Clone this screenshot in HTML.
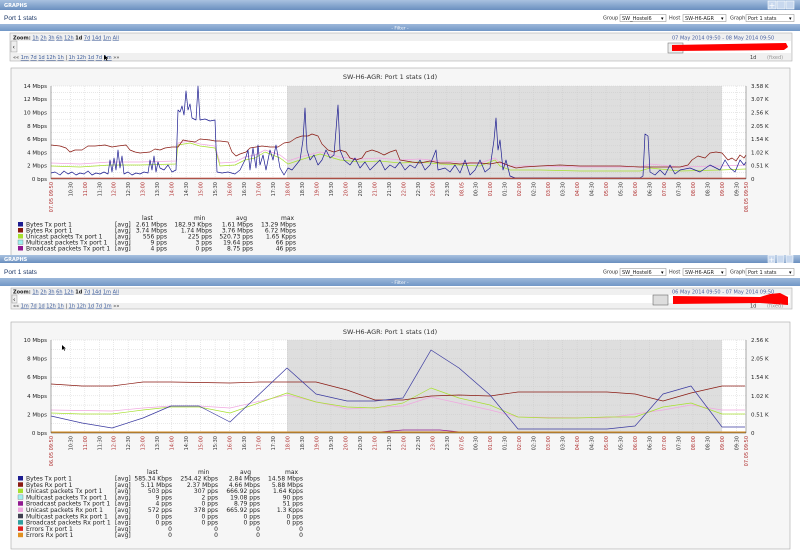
<!DOCTYPE html>
<html><head><meta charset="utf-8"><style>
html,body{margin:0;padding:0;background:#fff;width:800px;height:555px;overflow:hidden}
svg{display:block;font-family:"DejaVu Sans","Liberation Sans",sans-serif}
.u{fill:#3a5a9a;text-decoration:underline}
.t{font-size:5px;fill:#333}
.tr{font-size:5px;fill:#b03030}
.ax{font-size:5.5px;fill:#222}
.lg{font-size:6px;fill:#222}
</style></head><body>
<svg width="800" height="555" viewBox="0 0 800 555" xmlns="http://www.w3.org/2000/svg">
<defs>
<linearGradient id="hb" x1="0" y1="0" x2="0" y2="1"><stop offset="0" stop-color="#a9c2e0"/><stop offset="1" stop-color="#6a8fbf"/></linearGradient>
<linearGradient id="fb" x1="0" y1="0" x2="0" y2="1"><stop offset="0" stop-color="#9db8da"/><stop offset="1" stop-color="#7197c6"/></linearGradient>
<pattern id="hg" width="800" height="1" patternUnits="userSpaceOnUse"></pattern>
</defs>

<!-- ===== PANEL 1 ===== -->
<rect x="0" y="0" width="800" height="10" fill="url(#hb)"/>
<text x="4" y="7" font-size="5" font-weight="bold" fill="#fff">GRAPHS</text>
<rect x="768" y="1" width="8" height="8" fill="#c8d8ee" stroke="#fff" stroke-width=".6"/><text x="772" y="8" font-size="8" fill="#fff" text-anchor="middle">+</text>
<rect x="777" y="1" width="8" height="8" fill="#c8d8ee" stroke="#fff" stroke-width=".6"/>
<rect x="786" y="1" width="8" height="8" fill="#c8d8ee" stroke="#fff" stroke-width=".6"/>
<text x="4" y="20" font-size="6.5" fill="#1c3766" font-family="Liberation Sans,sans-serif">Port 1 stats</text>
<text x="603" y="19.5" font-size="5" fill="#333">Group</text>
<rect x="620" y="14.5" width="46" height="7" fill="#fff" stroke="#888" stroke-width=".5"/><text x="622" y="20" font-size="5" fill="#222">SW_Hostel6</text><text x="661" y="20" font-size="5">▾</text>
<text x="669" y="19.5" font-size="5" fill="#333">Host</text>
<rect x="683" y="14.5" width="43" height="7" fill="#fff" stroke="#888" stroke-width=".5"/><text x="685" y="20" font-size="5" fill="#222">SW-H6-AGR</text><text x="721" y="20" font-size="5">▾</text>
<text x="730" y="19.5" font-size="5" fill="#333">Graph</text>
<rect x="746" y="14.5" width="48" height="7" fill="#fff" stroke="#888" stroke-width=".5"/><text x="748" y="20" font-size="5" fill="#222">Port 1 stats</text><text x="789" y="20" font-size="5">▾</text>
<rect x="0" y="24" width="800" height="7" fill="url(#fb)"/>
<text x="400" y="29.5" font-size="4.5" fill="#fff" text-anchor="middle">- Filter -</text>
<rect x="10" y="33" width="782" height="28" fill="#f0f0f0" stroke="#b0b0b0" stroke-width=".6"/>
<text x="13" y="39.5" font-size="5" fill="#222"><tspan font-weight="bold">Zoom:</tspan> <tspan class="u">1h</tspan> <tspan class="u">2h</tspan> <tspan class="u">3h</tspan> <tspan class="u">6h</tspan> <tspan class="u">12h</tspan> <tspan font-weight="bold">1d</tspan> <tspan class="u">7d</tspan> <tspan class="u">14d</tspan> <tspan class="u">1m</tspan> <tspan class="u">All</tspan></text>
<text x="672" y="39.5" font-size="5" fill="#4a62a0">07 May 2014 09:50  -  08 May 2014 09:50</text>
<rect x="11" y="41" width="780" height="12" fill="#fff"/>
<rect x="11" y="41" width="6" height="11" fill="#eee" stroke="#999" stroke-width=".5"/><text x="12.5" y="49" font-size="6">‹</text>
<rect x="668" y="43" width="15" height="10" fill="#eee" stroke="#666" stroke-width=".5"/>
<path d="M672 45 L786 43 L788 47 L784 50 L672 51 Z" fill="#f00"/>
<text x="13" y="59" font-size="5" fill="#333">«« <tspan class="u">1m</tspan> <tspan class="u">7d</tspan> <tspan class="u">1d</tspan> <tspan class="u">12h</tspan> <tspan class="u">1h</tspan> | <tspan class="u">1h</tspan> <tspan class="u">12h</tspan> <tspan class="u">1d</tspan> <tspan class="u">7d</tspan> <tspan class="u">1m</tspan> »»</text>
<path d="M104 55 l0 5 l1.5 -1.3 l1.2 2.2 l.8 -.4 l-1.1 -2.1 l2 0 z" fill="#000"/>
<text x="750" y="59" font-size="5" fill="#333">1d</text><text x="767" y="59" font-size="5" fill="#999">(fixed)</text>

<rect x="11" y="68" width="779" height="190" fill="#f6f6f6" stroke="#a8a8a8" stroke-width=".6"/>
<text x="390" y="79" font-size="6.5" fill="#333" text-anchor="middle">SW-H6-AGR: Port 1 stats (1d)</text>
<rect x="51" y="86" width="695" height="93" fill="#fff"/>
<rect x="287" y="86" width="435" height="93" fill="#dedede"/>
<g stroke="#c8c8c8" stroke-width=".4" stroke-dasharray="1,1">
<path d="M51 92.6H746M51 99.3H746M51 105.9H746M51 112.6H746M51 119.2H746M51 125.9H746M51 132.5H746M51 139.2H746M51 145.8H746M51 152.4H746M51 159.1H746M51 165.7H746M51 172.4H746M51 86H746"/>
<path d="M70.3 86V179M84.8 86V179M99.3 86V179M113.7 86V179M128.2 86V179M142.7 86V179M157.2 86V179M171.7 86V179M186.1 86V179M200.6 86V179M215.1 86V179M229.6 86V179M244.1 86V179M258.5 86V179M273 86V179M287.5 86V179M302 86V179M316.5 86V179M330.9 86V179M345.4 86V179M359.9 86V179M374.4 86V179M388.9 86V179M403.3 86V179M417.8 86V179M432.3 86V179M446.8 86V179M461.3 86V179M475.7 86V179M490.2 86V179M504.7 86V179M519.2 86V179M533.7 86V179M548.1 86V179M562.6 86V179M577.1 86V179M591.6 86V179M606.1 86V179M620.5 86V179M635 86V179M649.5 86V179M664 86V179M678.5 86V179M692.9 86V179M707.4 86V179M721.9 86V179M736.4 86V179"/>
</g>
<g fill="none" stroke-width=".7" stroke-linejoin="round">
<polyline stroke="#f0a8e0" transform="translate(0,-3)" points="51,166 80,167 110,165 140,165 176,164 178,146 190,144 200,147 215,149 220,166 235,165 245,160 255,158 265,153 280,158 288,164 300,160 320,155 340,160 360,162 380,161 400,163 420,162 440,164 460,165 480,166 495,161 500,166 510,169 540,169 580,170 640,170 650,167 680,170 720,169 746,168"/>
<polyline stroke="#a8e030" points="51,166 80,167 110,165 140,165 176,164 178,145 190,143 200,146 215,148 220,166 235,165 245,160 255,158 265,152 280,158 288,164 300,160 320,154 340,160 360,162 380,161 400,163 420,162 440,164 460,165 480,166 495,160 500,166 510,170 540,170 580,171 640,171 650,168 680,171 720,170 746,169"/>
<polyline stroke="#8a1a12" points="51,145 60,146 66,148 70,152 75,150 82,150 88,146 95,146 105,145 112,147 118,146 126,145 130,150 135,152 140,153 150,152 155,149 160,150 165,148 172,147 178,147 183,140 188,141 195,142 200,139 210,140 215,141 220,141 228,142 232,152 236,156 240,154 246,152 250,148 256,147 262,146 270,147 278,147 284,143 290,142 296,138 302,136 308,136 312,134 318,136 322,144 328,150 334,152 340,150 346,152 350,158 356,160 362,158 366,152 372,150 378,152 384,155 390,152 396,150 400,160 406,161 412,162 420,163 430,161 440,163 450,163 460,164 470,163 480,163 490,164 500,162 510,166 516,168 524,167 540,166 560,165 580,166 600,166 620,166 640,167 660,167 680,167 688,165 692,160 698,156 705,158 710,153 716,152 722,153 728,160 732,158 736,161 740,155 744,158 746,155"/>
<polyline stroke="#1c1c90" points="51,173 55,172 60,175 64,171 68,174 72,172 76,175 80,173 84,174 88,171 92,175 96,173 100,174 104,172 108,174 110,160 112,172 114,158 116,170 118,150 120,168 122,156 124,174 128,172 132,175 136,173 140,174 144,172 148,173 150,160 152,170 154,156 156,172 158,162 160,168 164,170 168,165 172,172 176,170 178,110 180,112 182,106 184,115 186,91 188,110 190,104 192,118 196,120 198,86 200,120 205,119 210,121 215,120 217,172 222,173 228,172 235,174 240,170 245,160 248,150 250,170 253,148 256,168 258,145 260,165 263,155 266,170 270,150 273,160 276,145 280,168 284,175 288,168 292,170 296,165 300,160 303,140 305,108 307,150 310,160 314,155 318,165 322,160 326,150 330,158 334,155 338,105 340,150 344,160 350,165 355,158 360,168 365,162 370,170 375,165 380,160 385,170 390,165 395,168 400,162 405,170 410,165 415,168 420,160 425,170 430,165 436,150 438,170 445,168 450,172 455,165 460,173 465,160 470,175 475,170 480,160 485,172 490,168 494,140 496,118 498,150 500,140 503,170 506,160 510,176 515,178 640,178 643,176 645,134 648,136 650,172 655,175 660,170 665,175 670,165 675,174 680,170 690,168 700,172 710,165 720,170 725,160 730,168 735,172 740,160 744,165 746,162"/>
<path d="M51 178.3H746" stroke="#c03020" stroke-width="1"/>
</g>
<path d="M51 86V179H746V86" fill="none" stroke="#555" stroke-width=".5"/>
<g class="ax" text-anchor="end">
<text x="47" y="88">14 Mbps</text><text x="47" y="101">12 Mbps</text><text x="47" y="114.5">10 Mbps</text><text x="47" y="128">8 Mbps</text><text x="47" y="141">6 Mbps</text><text x="47" y="154.5">4 Mbps</text><text x="47" y="167.5">2 Mbps</text><text x="47" y="181">0 bps</text>
</g>
<g class="ax">
<text x="751" y="88">3.58 K</text><text x="751" y="101">3.07 K</text><text x="751" y="114.5">2.56 K</text><text x="751" y="128">2.05 K</text><text x="751" y="141">1.54 K</text><text x="751" y="154.5">1.02 K</text><text x="751" y="167.5">0.51 K</text><text x="751" y="181">0</text>
</g>
<g transform="translate(0,182) rotate(-90)" text-anchor="end" font-size="5">
<text class="tr" x="0" y="53">07.05 09:50</text>
<text class="t" x="0" y="72.3">10:30</text><text class="tr" x="0" y="86.8">11:00</text><text class="t" x="0" y="101.3">11:30</text><text class="tr" x="0" y="115.7">12:00</text><text class="t" x="0" y="130.2">12:30</text><text class="tr" x="0" y="144.7">13:00</text><text class="t" x="0" y="159.2">13:30</text><text class="tr" x="0" y="173.7">14:00</text><text class="t" x="0" y="188.1">14:30</text><text class="tr" x="0" y="202.6">15:00</text><text class="t" x="0" y="217.1">15:30</text><text class="tr" x="0" y="231.6">16:00</text><text class="t" x="0" y="246.1">16:30</text><text class="tr" x="0" y="260.5">17:00</text><text class="t" x="0" y="275">17:30</text><text class="tr" x="0" y="289.5">18:00</text><text class="t" x="0" y="304">18:30</text><text class="tr" x="0" y="318.5">19:00</text><text class="t" x="0" y="332.9">19:30</text><text class="tr" x="0" y="347.4">20:00</text><text class="t" x="0" y="361.9">20:30</text><text class="tr" x="0" y="376.4">21:00</text><text class="t" x="0" y="390.9">21:30</text><text class="tr" x="0" y="405.3">22:00</text><text class="t" x="0" y="419.8">22:30</text><text class="tr" x="0" y="434.3">23:00</text><text class="t" x="0" y="448.8">23:30</text><text class="tr" x="0" y="463.3">08.05</text><text class="t" x="0" y="477.7">00:30</text><text class="tr" x="0" y="492.2">01:00</text><text class="t" x="0" y="506.7">01:30</text><text class="tr" x="0" y="521.2">02:00</text><text class="t" x="0" y="535.7">02:30</text><text class="tr" x="0" y="550.1">03:00</text><text class="t" x="0" y="564.6">03:30</text><text class="tr" x="0" y="579.1">04:00</text><text class="t" x="0" y="593.6">04:30</text><text class="tr" x="0" y="608.1">05:00</text><text class="t" x="0" y="622.5">05:30</text><text class="tr" x="0" y="637">06:00</text><text class="t" x="0" y="651.5">06:30</text><text class="tr" x="0" y="666">07:00</text><text class="t" x="0" y="680.5">07:30</text><text class="tr" x="0" y="694.9">08:00</text><text class="t" x="0" y="709.4">08:30</text><text class="tr" x="0" y="723.9">09:00</text><text class="t" x="0" y="738.4">09:30</text>
<text class="tr" x="0" y="748">08.05 09:50</text>
</g>
<g class="lg">
<text x="142" y="220">last</text><text x="194" y="220">min</text><text x="236" y="220">avg</text><text x="281" y="220">max</text>
<rect x="18" y="222" width="5" height="4.5" fill="#1c1c90"/><text x="26" y="226.5">Bytes Tx port 1</text><text x="115" y="226.5">[avg]</text><text x="167" y="226.5" text-anchor="end">2.61 Mbps</text><text x="212" y="226.5" text-anchor="end">182.93 Kbps</text><text x="253" y="226.5" text-anchor="end">1.61 Mbps</text><text x="296" y="226.5" text-anchor="end">13.29 Mbps</text>
<rect x="18" y="228" width="5" height="4.5" fill="#8a1a12"/><text x="26" y="232.5">Bytes Rx port 1</text><text x="115" y="232.5">[avg]</text><text x="167" y="232.5" text-anchor="end">3.74 Mbps</text><text x="212" y="232.5" text-anchor="end">1.74 Mbps</text><text x="253" y="232.5" text-anchor="end">3.76 Mbps</text><text x="296" y="232.5" text-anchor="end">6.72 Mbps</text>
<rect x="18" y="234" width="5" height="4.5" fill="#a8e030"/><text x="26" y="238.5">Unicast packets Tx port 1</text><text x="115" y="238.5">[avg]</text><text x="167" y="238.5" text-anchor="end">556 pps</text><text x="212" y="238.5" text-anchor="end">225 pps</text><text x="253" y="238.5" text-anchor="end">520.73 pps</text><text x="296" y="238.5" text-anchor="end">1.65 Kpps</text>
<rect x="18" y="240" width="5" height="4.5" fill="#a0f0f0" stroke="#555" stroke-width=".3"/><text x="26" y="244.5">Multicast packets Tx port 1</text><text x="115" y="244.5">[avg]</text><text x="167" y="244.5" text-anchor="end">9 pps</text><text x="212" y="244.5" text-anchor="end">3 pps</text><text x="253" y="244.5" text-anchor="end">19.64 pps</text><text x="296" y="244.5" text-anchor="end">66 pps</text>
<rect x="18" y="246" width="5" height="4.5" fill="#901890"/><text x="26" y="250.5">Broadcast packets Tx port 1</text><text x="115" y="250.5">[avg]</text><text x="167" y="250.5" text-anchor="end">4 pps</text><text x="212" y="250.5" text-anchor="end">0 pps</text><text x="253" y="250.5" text-anchor="end">8.75 pps</text><text x="296" y="250.5" text-anchor="end">46 pps</text>
</g>

<!-- ===== PANEL 2 ===== -->
<rect x="0" y="255" width="800" height="8" fill="url(#hb)"/>
<text x="4" y="261" font-size="5" font-weight="bold" fill="#fff">GRAPHS</text>
<rect x="768" y="255.5" width="7" height="7" fill="#c8d8ee" stroke="#fff" stroke-width=".6"/><text x="771.5" y="262" font-size="7" fill="#fff" text-anchor="middle">+</text>
<rect x="777" y="255.5" width="7" height="7" fill="#c8d8ee" stroke="#fff" stroke-width=".6"/>
<rect x="786" y="255.5" width="7" height="7" fill="#c8d8ee" stroke="#fff" stroke-width=".6"/>
<text x="4" y="274" font-size="6.5" fill="#1c3766" font-family="Liberation Sans,sans-serif">Port 1 stats</text>
<text x="603" y="273.5" font-size="5" fill="#333">Group</text>
<rect x="620" y="268.5" width="46" height="7" fill="#fff" stroke="#888" stroke-width=".5"/><text x="622" y="274" font-size="5" fill="#222">SW_Hostel6</text><text x="661" y="274" font-size="5">▾</text>
<text x="669" y="273.5" font-size="5" fill="#333">Host</text>
<rect x="683" y="268.5" width="43" height="7" fill="#fff" stroke="#888" stroke-width=".5"/><text x="685" y="274" font-size="5" fill="#222">SW-H6-AGR</text><text x="721" y="274" font-size="5">▾</text>
<text x="730" y="273.5" font-size="5" fill="#333">Graph</text>
<rect x="746" y="268.5" width="48" height="7" fill="#fff" stroke="#888" stroke-width=".5"/><text x="748" y="274" font-size="5" fill="#222">Port 1 stats</text><text x="789" y="274" font-size="5">▾</text>
<rect x="0" y="278" width="800" height="8" fill="url(#fb)"/>
<text x="400" y="284" font-size="4.5" fill="#fff" text-anchor="middle">- Filter -</text>
<rect x="11" y="288" width="781" height="21" fill="#f0f0f0" stroke="#b0b0b0" stroke-width=".6"/>
<text x="13" y="293.5" font-size="5" fill="#222"><tspan font-weight="bold">Zoom:</tspan> <tspan class="u">1h</tspan> <tspan class="u">2h</tspan> <tspan class="u">3h</tspan> <tspan class="u">6h</tspan> <tspan class="u">12h</tspan> <tspan font-weight="bold">1d</tspan> <tspan class="u">7d</tspan> <tspan class="u">14d</tspan> <tspan class="u">1m</tspan> <tspan class="u">All</tspan></text>
<text x="672" y="293.5" font-size="5" fill="#4a62a0">06 May 2014 09:50  -  07 May 2014 09:50</text>
<rect x="12" y="295" width="778" height="8" fill="#fff"/>
<rect x="12" y="295" width="5" height="8" fill="#eee" stroke="#999" stroke-width=".5"/><text x="13" y="301.5" font-size="6">‹</text>
<rect x="653" y="295" width="15" height="10" fill="#ddd" stroke="#555" stroke-width=".5"/>
<path d="M673 296 L760 297 L770 294 L780 293 L788 297 L788 305 L760 303 L673 304 Z" fill="#f00"/>
<text x="13" y="307.5" font-size="5" fill="#333">«« <tspan class="u">1m</tspan> <tspan class="u">7d</tspan> <tspan class="u">1d</tspan> <tspan class="u">12h</tspan> <tspan class="u">1h</tspan> | <tspan class="u">1h</tspan> <tspan class="u">12h</tspan> <tspan class="u">1d</tspan> <tspan class="u">7d</tspan> <tspan class="u">1m</tspan> »»</text>
<text x="750" y="307.5" font-size="5" fill="#333">1d</text><text x="767" y="307.5" font-size="5" fill="#999">(fixed)</text>

<rect x="11" y="322" width="779" height="227" fill="#f6f6f6" stroke="#a8a8a8" stroke-width=".6"/>
<text x="390" y="334" font-size="6.5" fill="#333" text-anchor="middle">SW-H6-AGR: Port 1 stats (1d)</text>
<rect x="51" y="340" width="695" height="93" fill="#fff"/>
<rect x="287" y="340" width="435" height="93" fill="#dedede"/>
<g stroke="#c8c8c8" stroke-width=".4" stroke-dasharray="1,1">
<path d="M51 340H746M51 349.3H746M51 358.6H746M51 367.9H746M51 377.2H746M51 386.5H746M51 395.8H746M51 405.1H746M51 414.4H746M51 423.7H746"/>
<path d="M70.3 340V433M84.8 340V433M99.3 340V433M113.7 340V433M128.2 340V433M142.7 340V433M157.2 340V433M171.7 340V433M186.1 340V433M200.6 340V433M215.1 340V433M229.6 340V433M244.1 340V433M258.5 340V433M273 340V433M287.5 340V433M302 340V433M316.5 340V433M330.9 340V433M345.4 340V433M359.9 340V433M374.4 340V433M388.9 340V433M403.3 340V433M417.8 340V433M432.3 340V433M446.8 340V433M461.3 340V433M475.7 340V433M490.2 340V433M504.7 340V433M519.2 340V433M533.7 340V433M548.1 340V433M562.6 340V433M577.1 340V433M591.6 340V433M606.1 340V433M620.5 340V433M635 340V433M649.5 340V433M664 340V433M678.5 340V433M692.9 340V433M707.4 340V433M721.9 340V433M736.4 340V433"/>
</g>
<g fill="none" stroke-width=".7" stroke-linejoin="round">
<polyline stroke="#f0a8e0" points="51,410 112,411 143,408 171,406 199,406 230,408 287,395 347,409 403,406 431,397 490,410 518,417 607,418 663,410 691,405 722,410 745,410"/>
<polyline stroke="#a8e030" points="51,413 82,414 112,414 143,410 171,407 199,407 230,413 287,393 316,402 347,407 375,408 403,403 431,388 459,398 490,405 518,417 548,418 577,418 607,417 635,417 663,407 691,403 722,414 745,414"/>
<polyline stroke="#8a1a12" points="51,384 82,386 112,386 143,382 171,382 230,383 260,382 287,382 316,382 347,390 375,400 403,400 431,396 459,395 490,396 518,392 607,392 635,394 663,401 691,393 722,386 745,386"/>
<polyline stroke="#3a3aa0" points="51,416 82,423 112,428 143,418 171,406 199,406 230,422 287,368 316,394 347,401 375,401 403,398 431,350 459,368 490,395 518,429 548,429 577,429 607,429 635,426 663,394 691,386 722,427 745,427"/>
<path d="M380 432 L403 430 L440 430 L460 432" stroke="#901890"/>
<path d="M51 432.3H746" stroke="#d08a20" stroke-width="1.6"/>
</g>
<path d="M51 340V433H746V340" fill="none" stroke="#555" stroke-width=".5"/>
<path d="M62 345 l0 5 l1.3 -1.2 l1 2 l.8 -.4 l-1 -1.9 l1.8 0 z" fill="#000"/>
<g class="ax" text-anchor="end">
<text x="47" y="342">10 Mbps</text><text x="47" y="360.6">8 Mbps</text><text x="47" y="379.2">6 Mbps</text><text x="47" y="397.8">4 Mbps</text><text x="47" y="416.4">2 Mbps</text><text x="47" y="435">0 bps</text>
</g>
<g class="ax">
<text x="751" y="342">2.56 K</text><text x="751" y="360.6">2.05 K</text><text x="751" y="379.2">1.54 K</text><text x="751" y="397.8">1.02 K</text><text x="751" y="416.4">0.51 K</text><text x="751" y="435">0</text>
</g>
<g transform="translate(0,436) rotate(-90)" text-anchor="end" font-size="5">
<text class="tr" x="0" y="53">06.05 09:50</text>
<text class="t" x="0" y="72.3">10:30</text><text class="tr" x="0" y="86.8">11:00</text><text class="t" x="0" y="101.3">11:30</text><text class="tr" x="0" y="115.7">12:00</text><text class="t" x="0" y="130.2">12:30</text><text class="tr" x="0" y="144.7">13:00</text><text class="t" x="0" y="159.2">13:30</text><text class="tr" x="0" y="173.7">14:00</text><text class="t" x="0" y="188.1">14:30</text><text class="tr" x="0" y="202.6">15:00</text><text class="t" x="0" y="217.1">15:30</text><text class="tr" x="0" y="231.6">16:00</text><text class="t" x="0" y="246.1">16:30</text><text class="tr" x="0" y="260.5">17:00</text><text class="t" x="0" y="275">17:30</text><text class="tr" x="0" y="289.5">18:00</text><text class="t" x="0" y="304">18:30</text><text class="tr" x="0" y="318.5">19:00</text><text class="t" x="0" y="332.9">19:30</text><text class="tr" x="0" y="347.4">20:00</text><text class="t" x="0" y="361.9">20:30</text><text class="tr" x="0" y="376.4">21:00</text><text class="t" x="0" y="390.9">21:30</text><text class="tr" x="0" y="405.3">22:00</text><text class="t" x="0" y="419.8">22:30</text><text class="tr" x="0" y="434.3">23:00</text><text class="t" x="0" y="448.8">23:30</text><text class="tr" x="0" y="463.3">07.05</text><text class="t" x="0" y="477.7">00:30</text><text class="tr" x="0" y="492.2">01:00</text><text class="t" x="0" y="506.7">01:30</text><text class="tr" x="0" y="521.2">02:00</text><text class="t" x="0" y="535.7">02:30</text><text class="tr" x="0" y="550.1">03:00</text><text class="t" x="0" y="564.6">03:30</text><text class="tr" x="0" y="579.1">04:00</text><text class="t" x="0" y="593.6">04:30</text><text class="tr" x="0" y="608.1">05:00</text><text class="t" x="0" y="622.5">05:30</text><text class="tr" x="0" y="637">06:00</text><text class="t" x="0" y="651.5">06:30</text><text class="tr" x="0" y="666">07:00</text><text class="t" x="0" y="680.5">07:30</text><text class="tr" x="0" y="694.9">08:00</text><text class="t" x="0" y="709.4">08:30</text><text class="tr" x="0" y="723.9">09:00</text><text class="t" x="0" y="738.4">09:30</text>
<text class="tr" x="0" y="748">07.05 09:50</text>
</g>
<g class="lg">
<text x="147" y="474">last</text><text x="198" y="474">min</text><text x="240" y="474">avg</text><text x="285" y="474">max</text>
<rect x="18" y="476" width="5" height="4.5" fill="#1c1c90"/><text x="26" y="480.5">Bytes Tx port 1</text><text x="115" y="480.5">[avg]</text><text x="172" y="480.5" text-anchor="end">585.34 Kbps</text><text x="218" y="480.5" text-anchor="end">254.42 Kbps</text><text x="260" y="480.5" text-anchor="end">2.84 Mbps</text><text x="303" y="480.5" text-anchor="end">14.58 Mbps</text>
<rect x="18" y="482.3" width="5" height="4.5" fill="#8a1a12"/><text x="26" y="486.8">Bytes Rx port 1</text><text x="115" y="486.8">[avg]</text><text x="172" y="486.8" text-anchor="end">5.11 Mbps</text><text x="218" y="486.8" text-anchor="end">2.37 Mbps</text><text x="260" y="486.8" text-anchor="end">4.66 Mbps</text><text x="303" y="486.8" text-anchor="end">5.88 Mbps</text>
<rect x="18" y="488.6" width="5" height="4.5" fill="#a8e030"/><text x="26" y="493.1">Unicast packets Tx port 1</text><text x="115" y="493.1">[avg]</text><text x="172" y="493.1" text-anchor="end">503 pps</text><text x="218" y="493.1" text-anchor="end">307 pps</text><text x="260" y="493.1" text-anchor="end">666.92 pps</text><text x="303" y="493.1" text-anchor="end">1.64 Kpps</text>
<rect x="18" y="494.9" width="5" height="4.5" fill="#a0f0f0" stroke="#555" stroke-width=".3"/><text x="26" y="499.4">Multicast packets Tx port 1</text><text x="115" y="499.4">[avg]</text><text x="172" y="499.4" text-anchor="end">9 pps</text><text x="218" y="499.4" text-anchor="end">2 pps</text><text x="260" y="499.4" text-anchor="end">19.08 pps</text><text x="303" y="499.4" text-anchor="end">90 pps</text>
<rect x="18" y="501.2" width="5" height="4.5" fill="#901890"/><text x="26" y="505.7">Broadcast packets Tx port 1</text><text x="115" y="505.7">[avg]</text><text x="172" y="505.7" text-anchor="end">4 pps</text><text x="218" y="505.7" text-anchor="end">0 pps</text><text x="260" y="505.7" text-anchor="end">8.79 pps</text><text x="303" y="505.7" text-anchor="end">51 pps</text>
<rect x="18" y="507.5" width="5" height="4.5" fill="#f0a8e0"/><text x="26" y="512">Unicast packets Rx port 1</text><text x="115" y="512">[avg]</text><text x="172" y="512" text-anchor="end">572 pps</text><text x="218" y="512" text-anchor="end">378 pps</text><text x="260" y="512" text-anchor="end">665.92 pps</text><text x="303" y="512" text-anchor="end">1.3 Kpps</text>
<rect x="18" y="513.8" width="5" height="4.5" fill="#404050"/><text x="26" y="518.3">Multicast packets Rx port 1</text><text x="115" y="518.3">[avg]</text><text x="172" y="518.3" text-anchor="end">0 pps</text><text x="218" y="518.3" text-anchor="end">0 pps</text><text x="260" y="518.3" text-anchor="end">0 pps</text><text x="303" y="518.3" text-anchor="end">0 pps</text>
<rect x="18" y="520.1" width="5" height="4.5" fill="#30a0a0"/><text x="26" y="524.6">Broadcast packets Rx port 1</text><text x="115" y="524.6">[avg]</text><text x="172" y="524.6" text-anchor="end">0 pps</text><text x="218" y="524.6" text-anchor="end">0 pps</text><text x="260" y="524.6" text-anchor="end">0 pps</text><text x="303" y="524.6" text-anchor="end">0 pps</text>
<rect x="18" y="526.4" width="5" height="4.5" fill="#e02020"/><text x="26" y="530.9">Errors Tx port 1</text><text x="115" y="530.9">[avg]</text><text x="172" y="530.9" text-anchor="end">0</text><text x="218" y="530.9" text-anchor="end">0</text><text x="260" y="530.9" text-anchor="end">0</text><text x="303" y="530.9" text-anchor="end">0</text>
<rect x="18" y="532.7" width="5" height="4.5" fill="#e09020"/><text x="26" y="537.2">Errors Rx port 1</text><text x="115" y="537.2">[avg]</text><text x="172" y="537.2" text-anchor="end">0</text><text x="218" y="537.2" text-anchor="end">0</text><text x="260" y="537.2" text-anchor="end">0</text><text x="303" y="537.2" text-anchor="end">0</text>
</g>
</svg>
</body></html>
